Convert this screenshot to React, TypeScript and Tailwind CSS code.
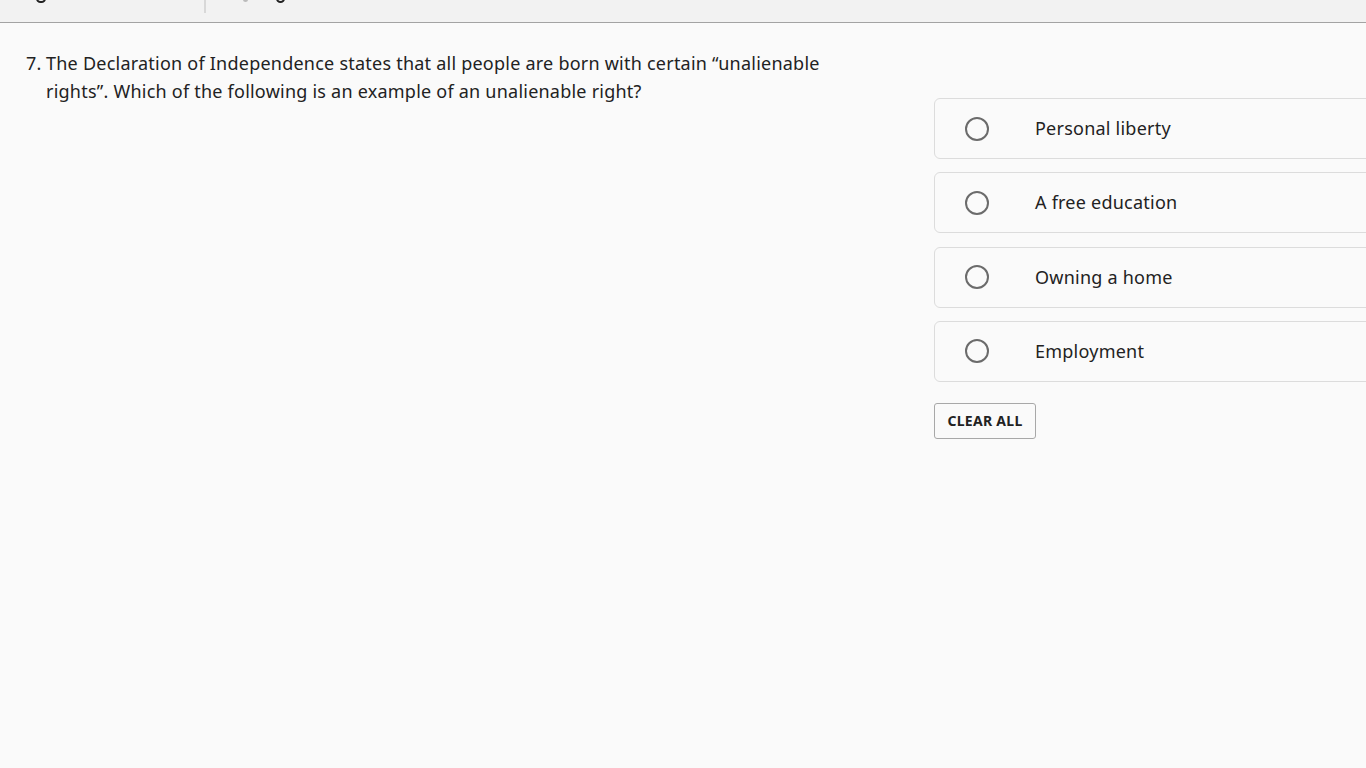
import React from "react";

const options = ["Personal liberty", "A free education", "Owning a home", "Employment"];

export default function App() {
  return (
    <div
      className="w-[1366px] h-[768px] overflow-hidden bg-[#fafafa] text-[#222]"
      style={{ fontFamily: '"Noto Sans", "Open Sans", sans-serif' }}
    >
      {/* toolbar cut off at the top */}
      <div className="relative h-[23px] bg-[#f2f2f2] border-b border-[#a3a3a3]">
        <div className="absolute left-[36px] -top-[6px] w-[10px] h-[9px] rounded-full border-2 border-[#222]" />
        <div className="absolute left-[204px] top-0 h-[13px] w-[2px] bg-[#d8d8d8]" />
        <div className="absolute left-[243px] -top-[4px] w-[5px] h-[6px] rounded-full bg-[#bbb]" />
        <div className="absolute left-[276px] -top-[6px] w-[9px] h-[9px] rounded-full border-2 border-[#222]" />
      </div>

      <div className="flex">
        <div className="w-[934px] shrink-0 pl-[26px] pr-[90px] pt-[26px]">
          <div className="flex text-[18px] leading-[28px] tracking-[0.23px] text-[#222]">
            <span className="w-[20px] shrink-0">7.</span>
            <p>
              The Declaration of Independence states that all people are born with certain “unalienable
              rights”. Which of the following is an example of an unalienable right?
            </p>
          </div>
        </div>

        <div className="w-[500px] shrink-0 pt-[75px]">
          <div className="flex flex-col gap-[13.33px]">
            {options.map((o) => (
              <label
                key={o}
                className="flex items-center h-[61px] rounded-[6px] border border-[#dcdcdc] bg-[#fafafa] cursor-pointer"
              >
                <span className="ml-[30px] w-[24px] h-[24px] rounded-full border-2 border-[#6b6b6b] shrink-0" />
                <span className="ml-[46px] text-[18px] tracking-[0.23px] text-[#222]">{o}</span>
              </label>
            ))}
          </div>
          <button className="mt-[21px] h-[36px] w-[102px] rounded-[3px] border border-[#a8a8a8] bg-[#fafafa] text-[14px] font-bold tracking-[0.3px] text-[#222]">
            CLEAR ALL
          </button>
        </div>
      </div>
    </div>
  );
}
